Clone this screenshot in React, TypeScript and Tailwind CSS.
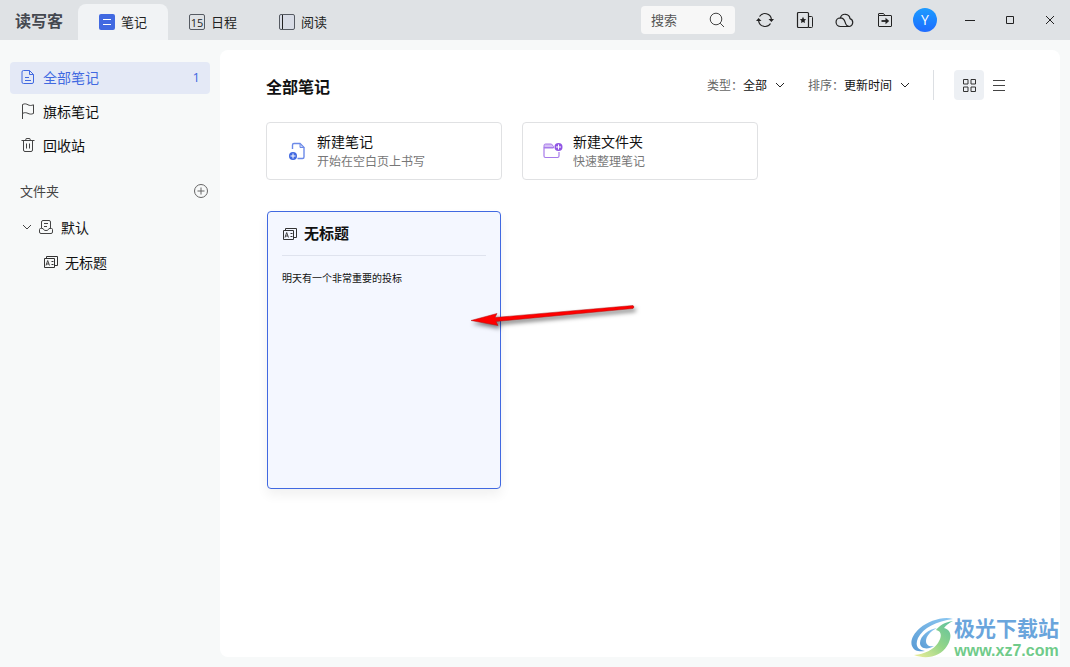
import type { ReactNode } from "react";

type IconProps = { className?: string };

function Svg({ className = "", box = "0 0 20 20", children }: { className?: string; box?: string; children: ReactNode }) {
  return (
    <svg viewBox={box} className={`shrink-0 ${className}`} fill="none" stroke="currentColor" aria-hidden="true">
      {children}
    </svg>
  );
}

const Chevron = ({ className = "" }: IconProps) => (
  <Svg box="0 0 10 10" className={`size-2.5 ${className}`}>
    <path d="M1 3l4 4 4-4" />
  </Svg>
);

const DocIcon = () => (
  <Svg box="0 0 16 16" className="size-4">
    <path d="M3.500 1.500H9.500L13.500 5.500V13a1.500 1.500 0 0 1-1.500 1.500H3.500A1.500 1.500 0 0 1 2 13V3a1.500 1.500 0 0 1 1.500-1.500zM9.500 1.500v4h4M5 8.500h4M5 11.500h6" />
  </Svg>
);

const FlagIcon = () => (
  <Svg box="0 0 16 16" className="size-4">
    <path d="M2.500 16V1.500C5 .3 6.500 1 8 1.800s3 1 5.500 0V10.500c-2.500 1-4 .6-5.500-.1s-3-1.200-5.500 0" />
  </Svg>
);

const TrashIcon = () => (
  <Svg box="0 0 16 16" className="size-4">
    <path d="M1.500 3.500h13M3.500 3.500V13a1.500 1.500 0 0 0 1.500 1.500h6A1.500 1.500 0 0 0 12.500 13V3.500M5.500 3.500l.7-2h3.600l.7 2M6.500 6.500v5M9.500 6.500v5" />
  </Svg>
);

const StackIcon = () => (
  <Svg box="0 0 16 16" className="size-4">
    <path d="M1.500 4.500h10v9h-10zM3.500 4.500v-2h11v9h-3M8.500 7.500h2M8.500 10.500h2" />
    <path d="M3 11.500l1.700-5 1.800 5M3.500 10h2.500" strokeWidth=".9" />
  </Svg>
);

const InboxIcon = () => (
  <Svg box="0 0 16 16" className="size-4">
    <path d="M3.500 9V3A1.500 1.500 0 0 1 5 1.500h6A1.500 1.500 0 0 1 12.500 3v6M6 4.500h4M6 7.500h3M3.500 9.500H2.500a1 1 0 0 0-1 1V13A1.500 1.500 0 0 0 3 14.500h10a1.500 1.500 0 0 0 1.500-1.500v-2.500a1 1 0 0 0-1-1H11c-.5 2.700-5.500 2.700-6 0z" />
  </Svg>
);

const NewNoteIcon = () => (
  <Svg className="size-5 text-[#6c8ae8]">
    <path d="M5.500 8V4A1.500 1.500 0 0 1 7 2.500h6l4 4V16a1.500 1.500 0 0 1-1.500 1.500h-5" strokeWidth="1.400" />
    <path d="M13 2.500v4h4z" fill="#c9d5f8" />
    <circle cx="6" cy="15" r="4" fill="#4169e1" stroke="none" />
    <path d="M6 12.500v5M3.500 15h5" stroke="#fff" />
  </Svg>
);

const NewFolderIcon = () => (
  <Svg className="size-5 text-[#a77bea]">
    <path d="M1 7V4.500A1.500 1.500 0 0 1 2.500 3h6l2 2.500v1.500z" fill="#d5c0f5" />
    <path d="M1 6.500V15A1.500 1.500 0 0 0 2.500 16.500h12a1.500 1.500 0 0 0 1.500-1.500v-4M1 6.500h9.500" strokeWidth="1.200" />
    <circle cx="15.500" cy="6" r="4" fill="#9055e4" stroke="none" />
    <path d="M15.500 3.500v5M13 6h5" stroke="#fff" />
  </Svg>
);

const SyncIcon = () => (
  <Svg className="size-5">
    <path d="M4.500 6.500a6.500 6.500 0 0 1 11.900 2.800M15.500 13.500A6.500 6.500 0 0 1 3.600 10.700" strokeWidth="1.200" />
    <path d="M13.500 9h5.500l-2.600 3zM1 11h5.500L3.600 8z" fill="currentColor" stroke="none" />
  </Svg>
);

const FavoritesIcon = () => (
  <Svg className="size-5">
    <rect x="2.500" y="2.500" width="11" height="15" rx="1" strokeWidth="1.200" />
    <path d="M13.500 6.500h3a1 1 0 0 1 1 1v9a1 1 0 0 1-1 1h-3" />
    <path d="M8 6.800l1 2.100 2.200.3-1.600 1.600.4 2.200-2-1.100L6 13l.4-2.200-1.600-1.600L7 8.900z" fill="currentColor" stroke="none" />
  </Svg>
);

const CloudIcon = () => (
  <Svg className="size-5">
    <path d="M5.500 16.500a4.300 4.300 0 0 1-.3-8.600c2.700 0 4.300 1.800 4.900 4.300.6 2.300 1.400 4.300 4.300 4.300zM5.400 7.900a4.900 4.900 0 0 1 9.600.7 4.100 4.100 0 0 1-.6 7.900" strokeWidth="1.200" />
  </Svg>
);

const ExportIcon = () => (
  <Svg className="size-5">
    <path d="M3.500 5.500V4a.5.500 0 0 1 .5-.5h4.500l1.500 2h6a.5.500 0 0 1 .5.500v10a.5.500 0 0 1-.5.500H4a.5.500 0 0 1-.5-.5zM3.500 5.500H10" />
    <path d="M6.500 11H12" strokeWidth="1.800" />
    <path d="M10.500 7.800l3.700 3.200-3.700 3.200z" fill="currentColor" stroke="none" />
  </Svg>
);

const actions = [
  { label: "同步", icon: <SyncIcon /> },
  { label: "收藏", icon: <FavoritesIcon /> },
  { label: "云端", icon: <CloudIcon /> },
  { label: "导出", icon: <ExportIcon /> },
];

const navItems = [
  { label: "全部笔记", icon: <DocIcon />, count: 1, active: true },
  { label: "旗标笔记", icon: <FlagIcon /> },
  { label: "回收站", icon: <TrashIcon /> },
];

const createCards = [
  { title: "新建笔记", desc: "开始在空白页上书写", icon: <NewNoteIcon /> },
  { title: "新建文件夹", desc: "快速整理笔记", icon: <NewFolderIcon /> },
];

function TitleBar() {
  return (
    <header className="flex h-10 bg-[#dfe2e5] text-[#222]">
      <div className="flex w-[78px] items-center justify-center text-base leading-6 font-bold text-[#444850]">读写客</div>
      <nav className="flex text-[13px]">
        <button className="mt-1 flex w-[90px] items-center justify-center gap-1.5 rounded-t-lg bg-[#f1f3f5]">
          <Svg box="0 0 16 16" className="size-4">
            <rect width="16" height="16" rx="2" fill="#4169e1" stroke="none" />
            <path d="M4 5.500h8M4 10.500h8" stroke="#fff" />
          </Svg>
          笔记
        </button>
        <button className="mt-1 flex w-[90px] items-center justify-center gap-1.5">
          <span className="flex size-4 items-center justify-center rounded-xs border border-[#555a62] font-['Open_Sans',sans-serif] text-[11px] leading-none">15</span>
          日程
        </button>
        <button className="mt-1 flex w-[90px] items-center justify-center gap-1.5">
          <Svg box="0 0 16 16" className="size-4 text-[#555a62]">
            <rect x=".5" y=".5" width="15" height="15" rx="1.500" fill="#d8dce6" />
            <path d="M3.500 1v14" stroke="#222" />
          </Svg>
          阅读
        </button>
      </nav>
      <div className="ml-auto flex items-center">
        <label className="mr-2.5 flex h-7 w-[94px] items-center rounded-sm bg-[#f7f7f7] px-2.5">
          <input type="text" placeholder="搜索" aria-label="搜索" className="w-full min-w-0 bg-transparent text-[13px] outline-none placeholder:text-[#555]" />
          <Svg box="0 0 16 16" className="size-4 text-[#444]">
            <circle cx="7" cy="7" r="5.800" />
            <path d="M11.200 11.200L15 15" />
          </Svg>
        </label>
        {actions.map((a) => (
          <button key={a.label} aria-label={a.label} className="flex size-10 items-center justify-center">
            {a.icon}
          </button>
        ))}
        <button aria-label="账户" className="mx-2 flex size-6 items-center justify-center rounded-full bg-linear-to-b from-[#1e9bff] to-[#1f6bff] font-['Open_Sans',sans-serif] text-sm text-white">
          Y
        </button>
        <div className="ml-[5px] flex">
          <button aria-label="最小化" className="flex size-10 items-center justify-center">
            <Svg box="0 0 10 10" className="size-2.5"><path d="M0 5.500h10" /></Svg>
          </button>
          <button aria-label="最大化" className="flex size-10 items-center justify-center">
            <Svg box="0 0 10 10" className="size-2.5"><path d="M1.500 1.500h7v7h-7z" /></Svg>
          </button>
          <button aria-label="关闭" className="flex size-10 items-center justify-center">
            <Svg box="0 0 10 10" className="size-2.5"><path d="M1 1l8 8M9 1L1 9" /></Svg>
          </button>
        </div>
      </div>
    </header>
  );
}

function Sidebar() {
  return (
    <aside className="w-[220px] shrink-0 px-2.5 pt-[22px] text-sm">
      <nav className="flex flex-col gap-0.5">
        {navItems.map((item) => (
          <a
            key={item.label}
            href="#"
            className={`flex h-8 items-center gap-[7px] rounded-sm px-2.5 pb-0.5 ${item.active ? "bg-[#e4e9f6] text-[#4169e1]" : "text-[#111]"}`}
          >
            <span className={item.active ? "" : "text-[#444]"}>{item.icon}</span>
            {item.label}
            {item.count && <span className="ml-auto font-['Open_Sans',sans-serif] text-[13px]">{item.count}</span>}
          </a>
        ))}
      </nav>
      <div className="mt-[13px] flex h-8 items-center justify-between pl-2.5 text-[13px] text-[#444]">
        文件夹
        <button aria-label="新建文件夹" className="mr-px text-[#666]">
          <Svg box="0 0 16 16" className="size-4">
            <circle cx="8" cy="8" r="6.500" />
            <path d="M8 4.500v7M4.500 8h7" />
          </Svg>
        </button>
      </div>
      <a href="#" className="mt-1 flex h-8 items-center pl-3 text-[#111]">
        <Chevron className="text-[#444]" />
        <span className="mr-[7px] ml-1.5 text-[#444]"><InboxIcon /></span>
        默认
      </a>
      <a href="#" className="mt-[3px] flex h-8 items-center gap-1.5 pl-[33px] text-[#111]">
        <span className="text-[#333]"><StackIcon /></span>
        无标题
      </a>
    </aside>
  );
}

function Filter({ label, value }: { label: string; value: string }) {
  return (
    <label className="flex items-center text-xs text-[#666]">
      {label}：
      <select className="field-sizing-content appearance-none bg-transparent pr-[18px] text-[#111] outline-none">
        <option>{value}</option>
      </select>
      <Chevron className="pointer-events-none -ml-2.5 text-[#222]" />
    </label>
  );
}

function Watermark() {
  return (
    <div className="absolute right-[11px] bottom-[7px] flex items-center">
      <svg viewBox="0 0 44 42" className="h-[42px] w-11" aria-hidden="true">
        <defs>
          <linearGradient id="wmBlue" x1="0" y1="1" x2="1" y2="0">
            <stop offset="0" stopColor="#5a9bd4" />
            <stop offset="1" stopColor="#8cc8f2" />
          </linearGradient>
          <linearGradient id="wmGreen" x1="0" y1="1" x2="1" y2="0">
            <stop offset="0" stopColor="#f0ee9a" />
            <stop offset=".5" stopColor="#93d588" />
            <stop offset="1" stopColor="#5cc0a0" />
          </linearGradient>
        </defs>
        <path d="M43 2C33-1 19 4 10 11 3 17 0 24 2 29c2 5 7 6 13 5C7 33 5 28 8 21 13 11 27 4 43 2z" fill="url(#wmBlue)" />
        <path d="M27 11c-8 1-17 8-17 15 0 6 8 7 14 3-5 1-8-1-8-5 0-5 5-10 11-13z" fill="url(#wmBlue)" />
        <path d="M43 4c-8 1-13 4-17 9 6 1 6 7 2 13-5 7-13 11-24 12 13 5 27 1 33-9 5-8 5-16-3-18 2-3 5-5 9-7z" fill="url(#wmGreen)" />
      </svg>
      <div className="text-center">
        <div className="text-[21px] leading-[22px] font-bold text-[#6aa5dc]">极光下载站</div>
        <div className="pt-1 font-['Liberation_Sans',sans-serif] text-base leading-[18px] font-bold text-[#70cb8a]">www.xz7.com</div>
      </div>
    </div>
  );
}

export default function App() {
  return (
    <div className="relative flex min-h-screen flex-col bg-[#f7f9f9] font-['Noto_Sans_CJK_SC',sans-serif]">
      <TitleBar />
      <div className="flex flex-1">
        <Sidebar />
        <main className="my-2.5 mr-2.5 flex-1 rounded-lg bg-white px-[46px] pt-5">
          <div className="flex h-[30px] items-center">
            <h1 className="mt-0.5 text-base font-bold text-[#111]">全部笔记</h1>
            <div className="ml-auto flex items-center gap-[23px]">
              <Filter label="类型" value="全部" />
              <Filter label="排序" value="更新时间" />
              <div className="flex items-center border-l border-[#dcdfe3] pl-5">
                <button aria-label="网格视图" className="flex size-[30px] items-center justify-center rounded-sm bg-[#edf0f4] text-[#333]">
                  <Svg box="0 0 16 16" className="size-4">
                    <path d="M2.500 2.500h4.500v4.500h-4.500zM10 2.500h4.500v4.500h-4.500zM2.500 10h4.500v4.500h-4.500zM10 10h4.500v4.500h-4.500z" />
                  </Svg>
                </button>
                <button aria-label="列表视图" className="flex size-[30px] items-center justify-center text-[#444]">
                  <Svg box="0 0 16 16" className="size-4">
                    <path d="M2 3.500h12M2 8.500h12M2 13.500h12" />
                  </Svg>
                </button>
              </div>
            </div>
          </div>

          {/* Create shortcuts */}
          <div className="mt-[22px] flex gap-5">
            {createCards.map((card) => (
              <button key={card.title} className="flex h-[58px] w-[236px] items-center gap-2.5 rounded-sm border border-[#e0e1e3] px-5 text-left">
                {card.icon}
                <span>
                  <span className="block text-sm text-[#111]">{card.title}</span>
                  <span className="block text-xs leading-5 text-[#777]">{card.desc}</span>
                </span>
              </button>
            ))}
          </div>

          {/* Notes */}
          <div className="mt-[30px] p-px">
            <article className="relative h-[278px] w-[234px] rounded-sm border border-[#4169e1] bg-[#f4f7ff] px-3.5 shadow-[0_6px_12px_rgba(0,0,0,0.06)]">
              <div className="flex h-11 items-center gap-1.5 border-b border-[#dfe3ee]">
                <span className="text-[#333]"><StackIcon /></span>
                <h2 className="text-[15px] font-bold text-[#111]">无标题</h2>
              </div>
              <p className="mt-3.5 text-[10px] leading-4 text-[#111]">明天有一个非常重要的投标</p>
              <svg viewBox="0 0 180 40" className="absolute top-[84px] left-[198px] h-10 w-[180px] drop-shadow-[2px_3px_2px_rgba(0,0,0,0.5)]" aria-hidden="true">
                <path d="M5 24.500L31 17.500 29 21.500 167 9.500Q169 11 167 12.500L30 25.500 32 29.500z" fill="#fe0000" stroke="#b01010" strokeWidth=".5" />
              </svg>
            </article>
          </div>
        </main>
      </div>
      <Watermark />
    </div>
  );
}
